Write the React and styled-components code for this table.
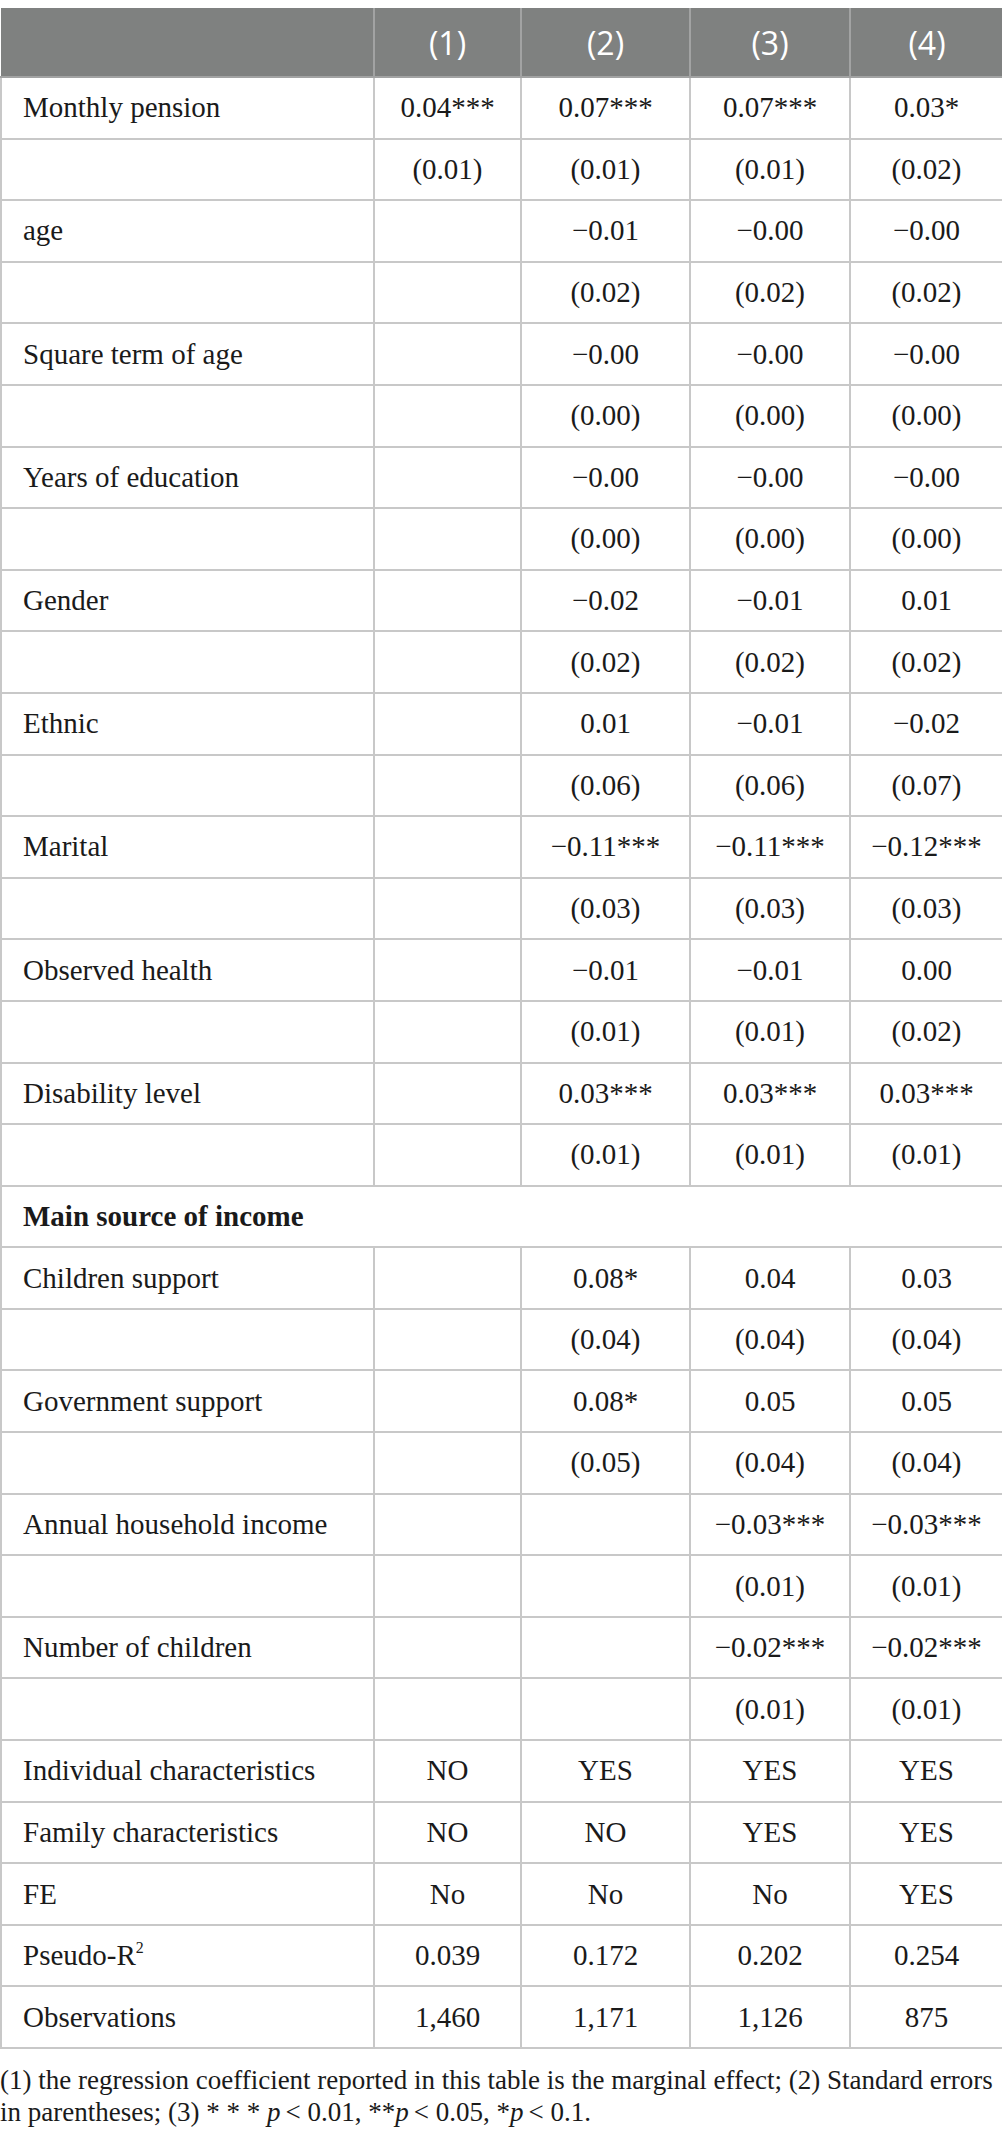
import React from 'react';
import styled, { createGlobalStyle } from 'styled-components';

const Global = createGlobalStyle`
  html, body { margin: 0; padding: 0; background: #fff; }
  body { font-family: "Liberation Serif", "Times New Roman", serif; color: #1a1a1a; }
`;

const Page = styled.div`
  width: 1002px;
  padding-top: 8px;
`;

const Table = styled.table`
  width: 1002px;
  border-collapse: collapse;
  table-layout: fixed;
  font-family: "Liberation Serif", "Times New Roman", serif;
  font-size: 29px;
`;

const HeadRow = styled.tr`
  height: 69px;
  background: #7f8180;
`;

const HeadCell = styled.th`
  color: #fff;
  font-family: "Open Sans", "Liberation Sans", sans-serif;
  font-weight: 400;
  font-size: 32px;
  text-align: center;
  border: 2px solid #a2a3a3;
  border-top: none;
  padding: 0;
  &:first-child { border-left: none; }
  &:last-child { border-right: none; }
`;

const Row = styled.tr`
  height: 61.6px;
`;

const Cell = styled.td`
  border: 2px solid #c8c8c8;
  padding: 0;
  text-align: ${p => (p.$label ? 'left' : 'center')};
  padding-left: ${p => (p.$label ? '21px' : '0')};
  font-weight: ${p => (p.$bold ? 700 : 400)};
  white-space: nowrap;
`;

const Sup = styled.sup`
  font-size: 0.55em;
  vertical-align: 0.75em;
  line-height: 0;
`;

const Footnote = styled.p`
  margin: 0;
  padding-top: 15px;
  font-size: 27px;
  line-height: 32px;
  white-space: nowrap;
  color: #1a1a1a;
`;

const P = styled.i`
  padding-right: 5px;
`;

const M = '\u2212';

const rows = [
  ['Monthly pension', '0.04***', '0.07***', '0.07***', '0.03*'],
  ['', '(0.01)', '(0.01)', '(0.01)', '(0.02)'],
  ['age', '', M + '0.01', M + '0.00', M + '0.00'],
  ['', '', '(0.02)', '(0.02)', '(0.02)'],
  ['Square term of age', '', M + '0.00', M + '0.00', M + '0.00'],
  ['', '', '(0.00)', '(0.00)', '(0.00)'],
  ['Years of education', '', M + '0.00', M + '0.00', M + '0.00'],
  ['', '', '(0.00)', '(0.00)', '(0.00)'],
  ['Gender', '', M + '0.02', M + '0.01', '0.01'],
  ['', '', '(0.02)', '(0.02)', '(0.02)'],
  ['Ethnic', '', '0.01', M + '0.01', M + '0.02'],
  ['', '', '(0.06)', '(0.06)', '(0.07)'],
  ['Marital', '', M + '0.11***', M + '0.11***', M + '0.12***'],
  ['', '', '(0.03)', '(0.03)', '(0.03)'],
  ['Observed health', '', M + '0.01', M + '0.01', '0.00'],
  ['', '', '(0.01)', '(0.01)', '(0.02)'],
  ['Disability level', '', '0.03***', '0.03***', '0.03***'],
  ['', '', '(0.01)', '(0.01)', '(0.01)'],
  'section',
  ['Children support', '', '0.08*', '0.04', '0.03'],
  ['', '', '(0.04)', '(0.04)', '(0.04)'],
  ['Government support', '', '0.08*', '0.05', '0.05'],
  ['', '', '(0.05)', '(0.04)', '(0.04)'],
  ['Annual household income', '', '', M + '0.03***', M + '0.03***'],
  ['', '', '', '(0.01)', '(0.01)'],
  ['Number of children', '', '', M + '0.02***', M + '0.02***'],
  ['', '', '', '(0.01)', '(0.01)'],
  ['Individual characteristics', 'NO', 'YES', 'YES', 'YES'],
  ['Family characteristics', 'NO', 'NO', 'YES', 'YES'],
  ['FE', 'No', 'No', 'No', 'YES'],
  ['pseudo', '0.039', '0.172', '0.202', '0.254'],
  ['Observations', '1,460', '1,171', '1,126', '875'],
];

const widths = [373, 147, 169, 160, 153];

export default function App() {
  return (
    <Page>
      <Global />
      <Table>
        <colgroup>
          {widths.map((w, i) => <col key={i} style={{ width: w }} />)}
        </colgroup>
        <thead>
          <HeadRow>
            <HeadCell />
            <HeadCell>(1)</HeadCell>
            <HeadCell>(2)</HeadCell>
            <HeadCell>(3)</HeadCell>
            <HeadCell>(4)</HeadCell>
          </HeadRow>
        </thead>
        <tbody>
          {rows.map((r, i) => {
            if (r === 'section') {
              return (
                <Row key={i}>
                  <Cell $label $bold colSpan={5}>Main source of income</Cell>
                </Row>
              );
            }
            return (
              <Row key={i}>
                <Cell $label>
                  {r[0] === 'pseudo' ? <>Pseudo-R<Sup>2</Sup></> : r[0]}
                </Cell>
                {r.slice(1).map((v, j) => <Cell key={j}>{v}</Cell>)}
              </Row>
            );
          })}
        </tbody>
      </Table>
      <Footnote>
        (1) the regression coefficient reported in this table is the marginal effect; (2) Standard errors
        <br />
        in parentheses; (3) * * * <P>p</P>{'< '}0.01, **<P>p</P>{'< '}0.05, *<P>p</P>{'< '}0.1.
      </Footnote>
    </Page>
  );
}
